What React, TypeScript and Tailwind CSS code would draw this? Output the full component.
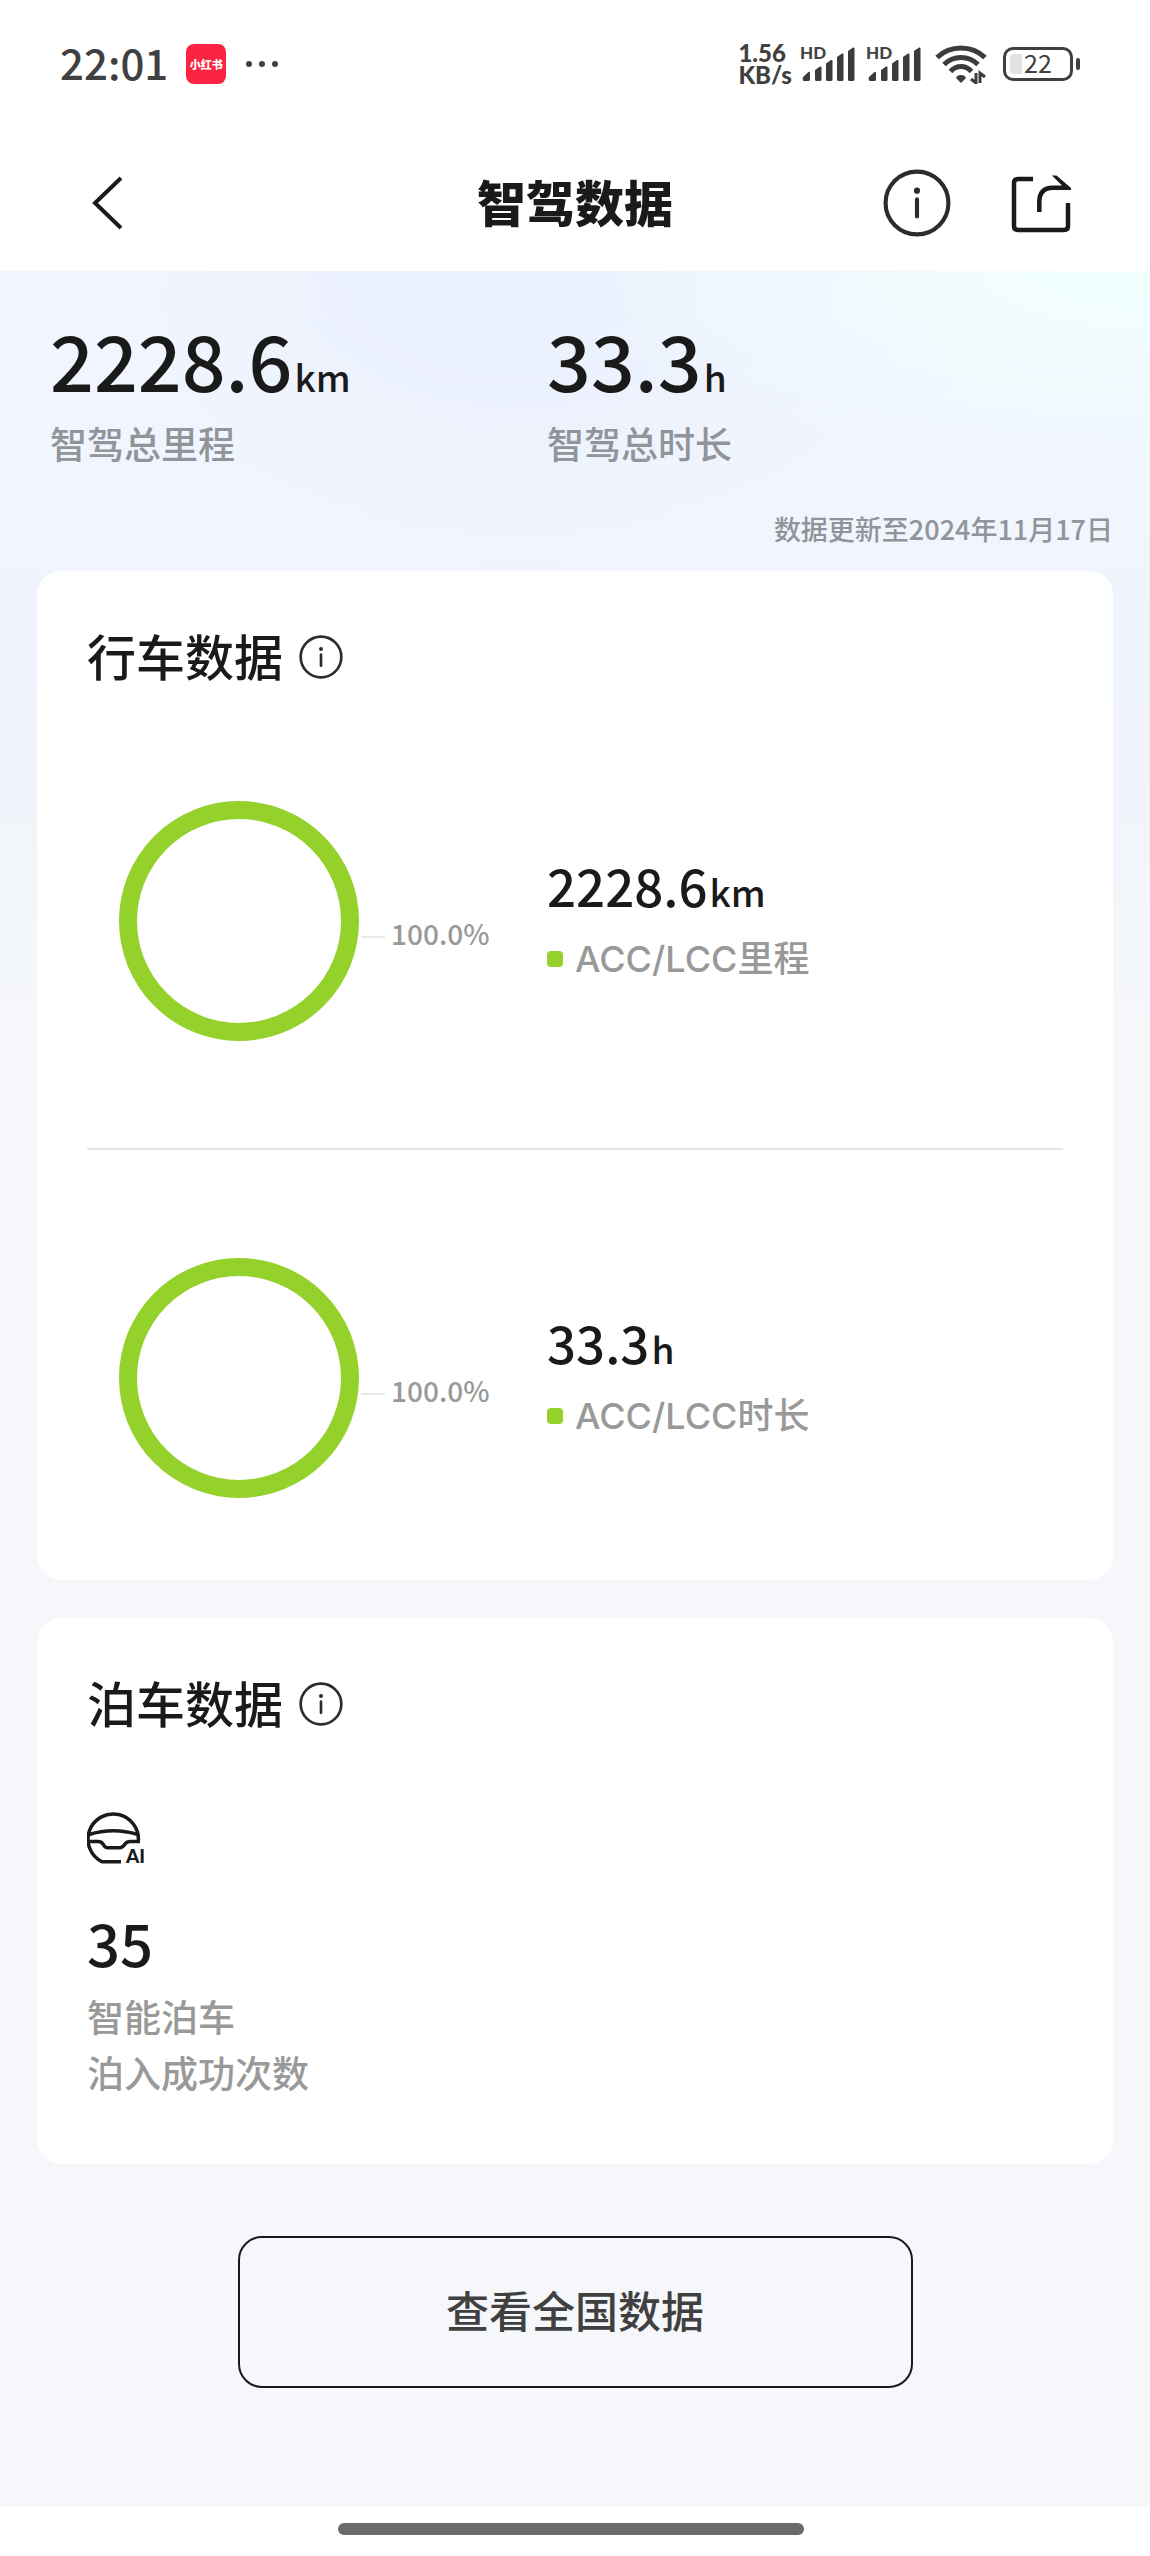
import type { ReactNode } from 'react'

type Metric = {
  value: string
  unit: string
  label: string
}

const TOTALS: Metric[] = [
  { value: '2228.6', unit: 'km', label: '智驾总里程' },
  { value: '33.3', unit: 'h', label: '智驾总时长' },
]

const DRIVING: (Metric & { percent: number })[] = [
  { value: '2228.6', unit: 'km', label: 'ACC/LCC里程', percent: 100 },
  { value: '33.3', unit: 'h', label: 'ACC/LCC时长', percent: 100 },
]

function SignalIcon() {
  return (
    <svg viewBox="0 -6 56 48" className="h-12 w-14" aria-hidden="true">
      <text x="0" y="13" fontSize="17" fontWeight="900" fill="#444" fontFamily="Lato, sans-serif">HD</text>
      <g fill="#3c3c3c">
        <path d="M3 31 8.500 26Q10 25 10 27V33.500Q10 35 8.500 35H4Q2 35 3 31Z" />
        <path d="M15 24 20 20.500Q21.500 20 21.500 21.500V33.500Q21.500 35 20 35H16.500Q15 35 15 33.500Z" />
        <path d="M26 17.500 31 14Q32.500 13.500 32.500 15V33.500Q32.500 35 31 35H27.500Q26 35 26 33.500Z" />
        <path d="M37 11 42 7.500Q43.500 7 43.500 8.500V33.500Q43.500 35 42 35H38.500Q37 35 37 33.500Z" />
        <path d="M48 5 53 1.500Q54.500 1 54.500 2.500V33.500Q54.500 35 53 35H49.500Q48 35 48 33.500Z" />
      </g>
    </svg>
  )
}

function WifiIcon() {
  return (
    <svg viewBox="0 0 52 40" className="h-10 w-[52px]" fill="none" aria-hidden="true">
      <g stroke="#3c3c3c" strokeWidth="5">
        <path d="M2 13.500Q12 4 26 4t24 9.500" />
        <path d="M9 20.500Q16 13.500 26 13.500T43 20.500" />
        <path d="M15.500 27.500Q20 22.500 26 22.500T36.500 27.500" />
      </g>
      <path d="M21 34Q22 31 26 31t5 3L26 39Z" fill="#3c3c3c" />
      <path d="M41 29v10l-5-4M45 39V29l5 4" stroke="#3c3c3c" strokeWidth="3" />
    </svg>
  )
}

function StatusBar() {
  return (
    <div className="flex h-32 items-center justify-between pr-[70px] pl-[60px] text-[#404040]">
      <div className="flex items-center">
        <span className="pb-1 text-[42px] leading-none font-medium">22:01</span>
        <span className="ml-[18px] flex size-10 items-center justify-center rounded-lg bg-[#fd2442] text-[11px] font-black text-white">
          小红书
        </span>
        <span className="ml-5 flex gap-[7px]">
          <i className="size-[6px] rounded-full bg-[#404040]" />
          <i className="size-[6px] rounded-full bg-[#404040]" />
          <i className="size-[6px] rounded-full bg-[#404040]" />
        </span>
      </div>
      <div className="flex items-center">
        <div className="font-[Lato] text-[24px] leading-[22px] font-black">
          <div>1.56</div>
          <div>KB/s</div>
        </div>
        <div className="ml-2 flex gap-[10px]">
          <SignalIcon />
          <SignalIcon />
        </div>
        <div className="ml-[13px]">
          <WifiIcon />
        </div>
        <div className="ml-4 flex items-center gap-[3px]">
          <div className="relative flex h-[34px] w-[70px] items-center justify-center rounded-[10px] border-[3px] border-[#404040]">
            <i className="absolute inset-y-1 left-1 w-3 rounded-l bg-[#e2e2e2]" />
            <span className="relative pb-1 text-[25px] leading-none">22</span>
          </div>
          <i className="h-3 w-1 rounded-full bg-[#404040]" />
        </div>
      </div>
    </div>
  )
}

function InfoIcon({ className, stroke }: { className: string; stroke: number }) {
  return (
    <svg viewBox="0 0 66 66" className={className} fill="none" aria-hidden="true">
      <circle cx="33" cy="33" r={32.5 - stroke / 2} stroke="#2c2c2c" strokeWidth={stroke} />
      <circle cx="33" cy="21" r="3" fill="#2c2c2c" />
      <path d="M33 29.500V46" stroke="#2c2c2c" strokeWidth={stroke} strokeLinecap="round" />
    </svg>
  )
}

function NavBar() {
  return (
    <header className="grid h-[143px] grid-cols-[1fr_auto_1fr] items-center px-[78px] pt-[7px]">
      <button type="button" aria-label="返回" className="justify-self-start">
        <svg viewBox="-6 0 54 54" className="size-[54px]" fill="none" aria-hidden="true">
          <path d="M37 2 11 27l26 25" stroke="#1a1a1a" strokeWidth="4" />
        </svg>
      </button>
      <h1 className="pb-[6px] text-[49px] leading-none font-black">智驾数据</h1>
      <div className="flex items-center gap-[59px] justify-self-end">
        <button type="button" aria-label="说明">
          <InfoIcon className="size-[68px]" stroke={4} />
        </button>
        <button type="button" aria-label="分享">
          <svg viewBox="0 0 62 60" className="h-[60px] w-[62px]" fill="none" aria-hidden="true">
            <path d="M23 6H8Q4 6 4 10V53Q4 57 8 57H54Q58 57 58 53V30" stroke="#1a1a1a" strokeWidth="4.500" />
            <path d="M29.300 39V29Q29.300 14.700 43 14.700H55" stroke="#1a1a1a" strokeWidth="4.500" />
            <path d="M42 2.500H46.500L61 15V17H52V12.500Z" fill="#1a1a1a" />
          </svg>
        </button>
      </div>
    </header>
  )
}

function Card({ title, children }: { title: string; children: ReactNode }) {
  return (
    <section className="rounded-3xl bg-white px-[50px] pt-[54px]">
      <div className="flex h-16 items-center gap-4">
        <h2 className="pb-[6px] text-[49px] leading-none font-medium">{title}</h2>
        <button type="button" aria-label={`${title}说明`}>
          <InfoIcon className="size-11" stroke={4} />
        </button>
      </div>
      {children}
    </section>
  )
}

function Ring({ percent }: { percent: number }) {
  const circumference = 2 * Math.PI * 111
  return (
    <div className="flex items-center pl-8">
      <svg viewBox="0 0 240 240" className="size-[240px] -rotate-90" fill="none" aria-hidden="true">
        <circle
          cx="120"
          cy="120"
          r="111"
          stroke="#94d12a"
          strokeWidth="18"
          strokeDasharray={`${(circumference * percent) / 100} ${circumference}`}
        />
      </svg>
      <div className="mt-6 flex items-center">
        <i className="mt-2 ml-[2px] h-[2px] w-6 bg-[#e8e8e8]" />
        <span className="ml-[6px] text-[28px] leading-none font-medium text-[#999]">{percent.toFixed(1)}%</span>
      </div>
    </div>
  )
}

export default function App() {
  return (
    <div className="flex min-h-screen flex-col bg-white font-['Noto_Sans_CJK_SC',sans-serif] text-[#1a1a1a]">
      <StatusBar />
      <NavBar />

      <main className="flex-1 bg-[#f5f7fb] bg-[radial-gradient(600px_200px_at_100%_0,#f0fffe,transparent),radial-gradient(500px_300px_at_45%_0,#e9f0fd,transparent),linear-gradient(#f2f6fe,#f0f5fe_260px,#eff3fa_430px,#f5f7fb_760px)] px-[37px]">
        <div className="grid grid-cols-[497px_1fr] pt-12 pl-[13px]">
          {TOTALS.map(t => (
            <div key={t.label}>
              <div className="flex items-baseline gap-[2px]">
                <span className="text-[77px] leading-[80px] font-medium">{t.value}</span>
                <span className="text-[37px] leading-none font-medium">{t.unit}</span>
              </div>
              <div className="mt-5 text-[37px] leading-[48px] font-medium text-[#919499]">{t.label}</div>
            </div>
          ))}
        </div>
        <p className="mt-[46px] mb-[26px] text-right text-[27px] leading-8 font-medium text-[#919499]">
          数据更新至2024年11月17日
        </p>

        <div className="flex flex-col gap-[38px]">
          <Card title="行车数据">
            <div className="mt-1 divide-y-2 divide-[#e6e6e6]">
              {DRIVING.map(d => (
                <div key={d.label} className="grid grid-cols-[460px_1fr] items-center pt-[108px] pb-[107px] last:pb-[82px]">
                  <Ring percent={d.percent} />
                  <div>
                    <div className="flex items-baseline gap-[2px]">
                      <span className="text-[51px] leading-[60px] font-medium">{d.value}</span>
                      <span className="text-[37px] leading-none font-medium">{d.unit}</span>
                    </div>
                    <div className="mt-4 flex items-center gap-3 font-['Inter','Noto_Sans_CJK_SC',sans-serif] text-[36px] leading-[56px] font-medium text-[#999]">
                      <i className="size-4 rounded-sm bg-[#94d12a]" />
                      {d.label}
                    </div>
                  </div>
                </div>
              ))}
            </div>
          </Card>

          <Card title="泊车数据">
            <svg viewBox="1 0 60 56" className="mt-[75px] h-14 w-[60px]" fill="none" aria-hidden="true">
              <g stroke="#1a1a1a" strokeWidth="3.500">
                <path d="M35 50.700H16A25.200 25.200 0 1 1 52.300 30.500H44Q41 30.500 39 33Q36.500 36.700 34 36.700H21Q19 36.700 17 33Q15.500 30.500 12 30.500H3" />
                <path d="M3 23.500Q27 16 52 23.500" />
              </g>
              <text x="40" y="52" fontSize="19" fontWeight="900" fill="#1a1a1a" fontFamily="Lato, sans-serif">AI</text>
            </svg>
            <div className="mt-[41px] text-[58px] leading-[68px] font-medium">35</div>
            <p className="mt-3 pb-16 text-[37px] leading-[56px] font-medium text-[#999]">
              智能泊车
              <br />
              泊入成功次数
            </p>
          </Card>
        </div>

        <button
          type="button"
          className="mx-auto mt-[72px] mb-[118px] flex h-[152px] w-[675px] items-center justify-center rounded-3xl border-2 border-[#1a1a1a] pb-[6px] text-[43px] font-medium text-[#404040]"
        >
          查看全国数据
        </button>
      </main>

      <footer className="flex h-[49px] justify-center pt-4 pr-2">
        <i className="h-3 w-[466px] rounded-full bg-[#6a6a6a]" />
      </footer>
    </div>
  )
}
